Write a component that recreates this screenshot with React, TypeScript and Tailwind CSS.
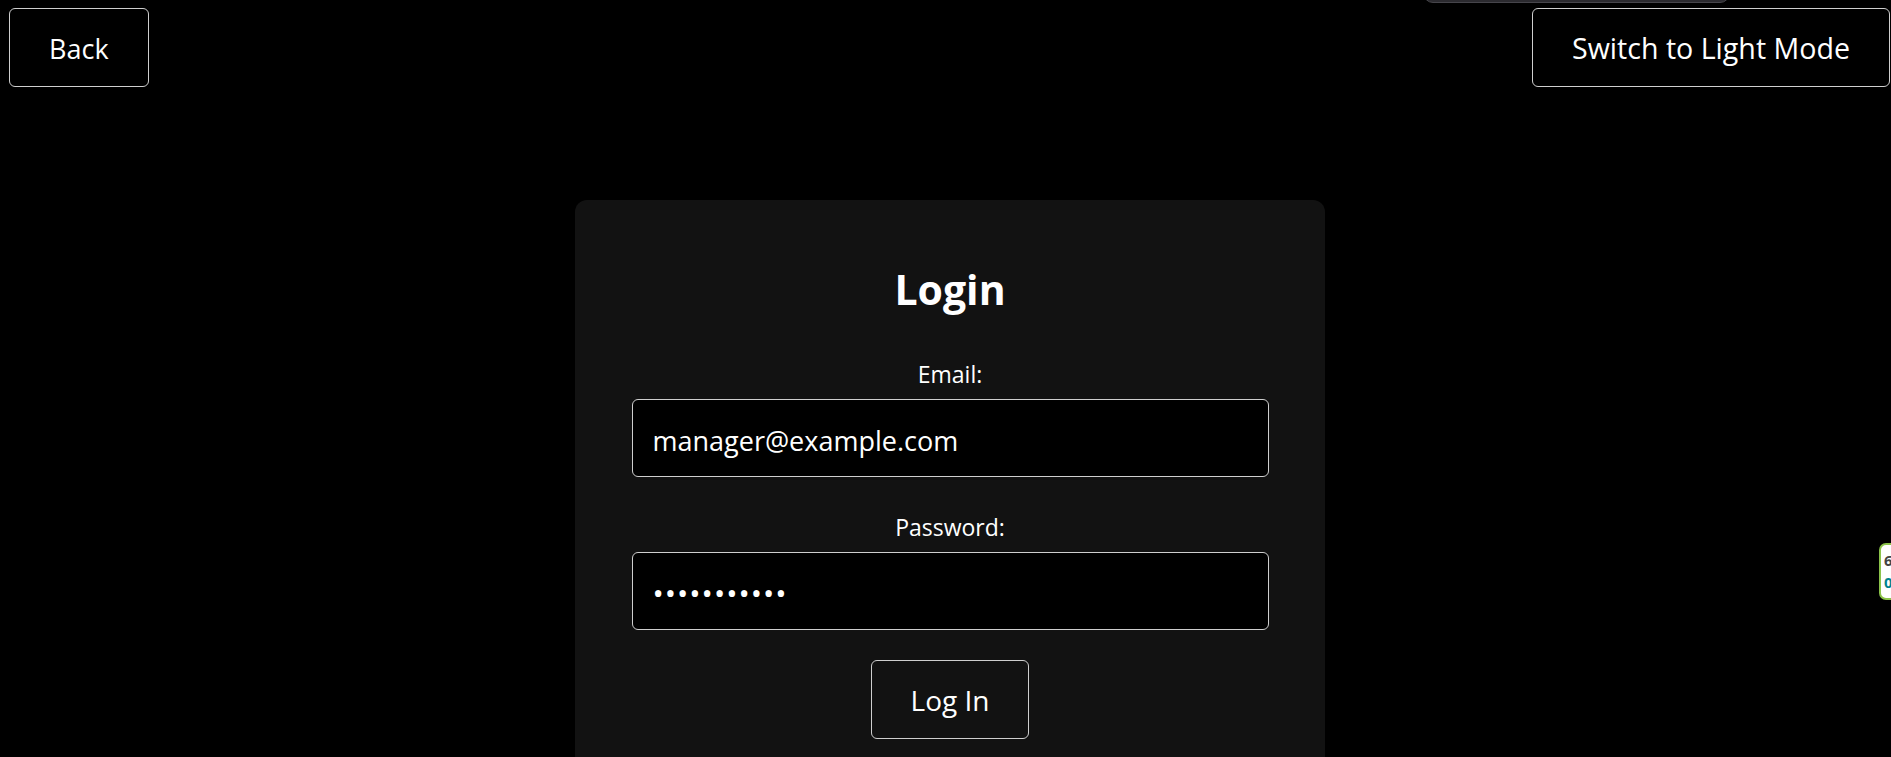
import { useState } from 'react'

const font = { fontFamily: '"Open Sans", "Noto Sans", sans-serif' }

const App = () => {
  const [email, setEmail] = useState('manager@example.com')
  const [password, setPassword] = useState('password123')

  return (
    <div
      className="relative w-full h-[757px] overflow-hidden bg-black text-white"
      style={font}
    >
      {/* toast peeking in from the top */}
      <div className="absolute left-[1423px] top-[-40px] w-[307px] h-[43px] rounded-[10px] bg-[#2b2a2f] border border-[#46454b]" />

      <header className="flex items-start justify-between pt-[8px] pl-[9px] pr-[1px]">
        <button className="h-[79px] px-[39px] pt-[4px] rounded-[6px] border border-[#cfcfcf] bg-black text-[27px] text-white">
          Back
        </button>
        <button className="h-[79px] px-[39px] pt-[2px] rounded-[6px] border border-[#cfcfcf] bg-black text-[28.6px] text-white">
          Switch to Light Mode
        </button>
      </header>

      <main className="flex justify-center pl-[9px] mt-[113px]">
        <div className="w-[750px] rounded-[12px] bg-[#121212] px-[57px] pt-[64px] pb-[60px] flex flex-col items-center">
          <h2 className="text-[41px] leading-[50px] font-bold">Login</h2>

          <form
            className="w-full flex flex-col items-center mt-[44px]"
            onSubmit={(e) => e.preventDefault()}
          >
            <label htmlFor="email" className="text-[23px] leading-[32px]">
              Email:
            </label>
            <input
              id="email"
              type="email"
              value={email}
              onChange={(e) => setEmail(e.target.value)}
              className="mt-[9px] w-[637px] h-[78px] rounded-[6px] border border-[#cfcfcf] bg-black px-[20px] pt-[4px] text-[27px] text-white outline-none"
              style={font}
            />

            <label htmlFor="password" className="mt-[34px] text-[23px] leading-[32px]">
              Password:
            </label>
            <input
              id="password"
              type="password"
              value={password}
              onChange={(e) => setPassword(e.target.value)}
              className="mt-[9px] w-[637px] h-[78px] rounded-[6px] border border-[#cfcfcf] bg-black px-[20px] pt-[3px] text-[30px] text-white outline-none tracking-[1px]"
              style={font}
            />

            <button
              type="submit"
              className="mt-[30px] h-[79px] px-[39px] pt-[1px] rounded-[6px] border border-[#cfcfcf] bg-[#121212] text-[28px] text-white"
            >
              Log In
            </button>
          </form>
        </div>
      </main>

      {/* extension widget clipped at the right edge */}
      <div className="absolute left-[1879px] top-[543px] w-[24px] h-[57px] rounded-[7px] border-2 border-[#8bc34a] bg-white flex flex-col items-start pl-[3px] pt-[6px] gap-[4px] text-[15px] leading-[18px] font-bold">
        <span className="text-[#444]">6</span>
        <span className="text-[#00838f]">0</span>
      </div>
    </div>
  )
}

export default App
